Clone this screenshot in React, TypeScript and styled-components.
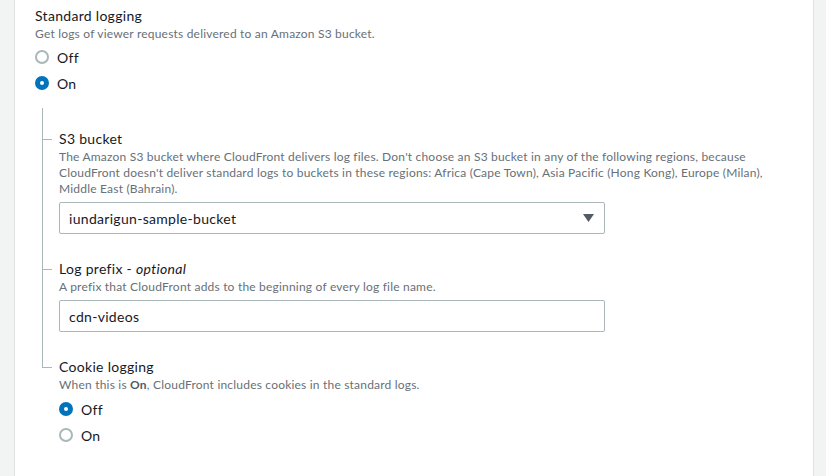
import React from "react";
import styled, { createGlobalStyle } from "styled-components";

const GlobalStyle = createGlobalStyle`
  html, body {
    margin: 0;
    padding: 0;
    background: #f2f3f3;
    font-family: Lato, "Noto Sans", sans-serif;
    color: #16191f;
  }
`;

const Page = styled.div`
  display: flex;
  height: 476px;
`;

const Panel = styled.section`
  margin-left: 14px;
  width: 800px;
  box-sizing: border-box;
  height: 100%;
  background: #ffffff;
  border-left: 1px solid #e1e4e4;
  border-right: 1px solid #e1e4e4;
  padding: 6px 20px 0 20px;
  display: flex;
  flex-direction: column;
`;

const Label = styled.div`
  font-size: 14px;
  line-height: 20px;
  letter-spacing: 0.3px;
  color: #16191f;
  em {
    font-style: italic;
  }
`;

const Description = styled.div<{ $width?: number }>`
  font-size: 12px;
  line-height: 16px;
  letter-spacing: 0.2px;
  color: #687078;
  max-width: ${(p) => (p.$width ? `${p.$width}px` : "none")};
  b {
    font-weight: 700;
    color: #545b64;
  }
`;

const RadioGroup = styled.div<{ $top: number }>`
  display: flex;
  flex-direction: column;
  margin-top: ${(p) => p.$top}px;
`;

const RadioRow = styled.label`
  display: flex;
  align-items: center;
  gap: 8px;
  height: 26px;
  font-size: 14px;
  letter-spacing: 0.3px;
  color: #16191f;
`;

const RadioDot = styled.span<{ $checked?: boolean }>`
  width: 14px;
  height: 14px;
  box-sizing: border-box;
  border-radius: 50%;
  background: #ffffff;
  border: ${(p) => (p.$checked ? "5px solid #0073bb" : "2px solid #aab7b8")};
  flex: none;
`;

const Nested = styled.div`
  margin-left: 7px;
  margin-top: 12px;
  padding-top: 21px;
  display: flex;
  flex-direction: column;
  gap: 25px;
  position: relative;
`;

const Field = styled.div<{ $last?: boolean }>`
  position: relative;
  padding-left: 17px;
  display: flex;
  flex-direction: column;

  &::before {
    content: "";
    position: absolute;
    left: 0;
    top: -25px;
    ${(p) => (p.$last ? "height: 35px;" : "bottom: -25px;")}
    border-left: 1px solid #aab7b8;
  }
  &::after {
    content: "";
    position: absolute;
    left: 0;
    top: 10px;
    width: 10px;
    border-top: 1px solid #aab7b8;
  }
`;

const FirstField = styled(Field)`
  &::before {
    top: -21px;
    bottom: -25px;
    height: auto;
  }
`;

const Box = styled.div`
  margin-top: 5px;
  width: 546px;
  height: 32px;
  box-sizing: border-box;
  border: 1px solid #aab7b8;
  border-radius: 2px;
  padding: 0 10px 0 9px;
  display: flex;
  align-items: center;
  justify-content: space-between;
  font-size: 14px;
  letter-spacing: 0.3px;
  color: #16191f;
`;

const Caret = styled.svg`
  width: 11px;
  height: 8px;
`;

export default function App() {
  return (
    <>
      <GlobalStyle />
      <Page>
        <Panel>
          <Label>Standard logging</Label>
          <Description>Get logs of viewer requests delivered to an Amazon S3 bucket.</Description>
          <RadioGroup $top={2}>
            <RadioRow>
              <RadioDot />
              Off
            </RadioRow>
            <RadioRow>
              <RadioDot $checked />
              On
            </RadioRow>
          </RadioGroup>
          <Nested>
            <FirstField>
              <Label>S3 bucket</Label>
              <Description $width={730}>
                The Amazon S3 bucket where CloudFront delivers log files. Don't choose an S3 bucket in any of the
                following regions, because CloudFront doesn't deliver standard logs to buckets in these regions:
                Africa (Cape Town), Asia Pacific (Hong Kong), Europe (Milan), Middle East (Bahrain).
              </Description>
              <Box>
                <span>iundarigun-sample-bucket</span>
                <Caret viewBox="0 0 11 8">
                  <path d="M0 0 H11 L5.5 8 Z" fill="#545b64" />
                </Caret>
              </Box>
            </FirstField>
            <Field>
              <Label>
                Log prefix - <em>optional</em>
              </Label>
              <Description>A prefix that CloudFront adds to the beginning of every log file name.</Description>
              <Box>
                <span>cdn-videos</span>
              </Box>
            </Field>
            <Field $last>
              <Label>Cookie logging</Label>
              <Description>
                When this is <b>On</b>, CloudFront includes cookies in the standard logs.
              </Description>
              <RadioGroup $top={3}>
                <RadioRow>
                  <RadioDot $checked />
                  Off
                </RadioRow>
                <RadioRow>
                  <RadioDot />
                  On
                </RadioRow>
              </RadioGroup>
            </Field>
          </Nested>
        </Panel>
      </Page>
    </>
  );
}
